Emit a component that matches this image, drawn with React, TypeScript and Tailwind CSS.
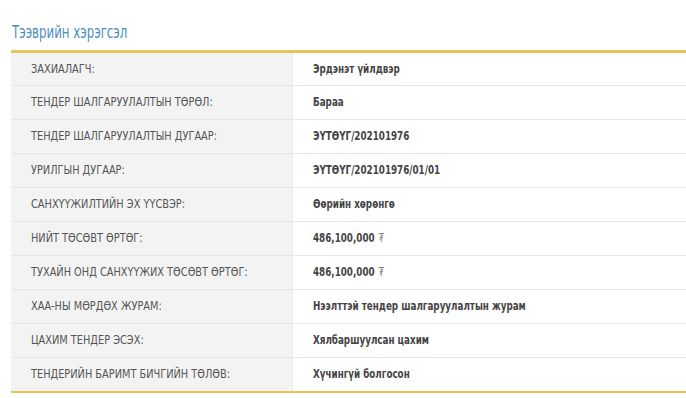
const rows: [string, string][] = [
  ["ЗАХИАЛАГЧ:", "Эрдэнэт үйлдвэр"],
  ["ТЕНДЕР ШАЛГАРУУЛАЛТЫН ТӨРӨЛ:", "Бараа"],
  ["ТЕНДЕР ШАЛГАРУУЛАЛТЫН ДУГААР:", "ЭҮТӨҮГ/202101976"],
  ["УРИЛГЫН ДУГААР:", "ЭҮТӨҮГ/202101976/01/01"],
  ["САНХҮҮЖИЛТИЙН ЭХ ҮҮСВЭР:", "Өөрийн хөрөнгө"],
  ["НИЙТ ТӨСӨВТ ӨРТӨГ:", "486,100,000"],
  ["ТУХАЙН ОНД САНХҮҮЖИХ ТӨСӨВТ ӨРТӨГ:", "486,100,000"],
  ["ХАА-НЫ МӨРДӨХ ЖУРАМ:", "Нээлттэй тендер шалгаруулалтын журам"],
  ["ЦАХИМ ТЕНДЕР ЭСЭХ:", "Хялбаршуулсан цахим"],
  ["ТЕНДЕРИЙН БАРИМТ БИЧГИЙН ТӨЛӨВ:", "Хүчингүй болгосон"],
];

// no narrow font installed, so DejaVu Condensed squeezed horizontally
export default function App() {
  return (
    <div
      className="h-[398px] w-[686px] overflow-hidden bg-white pl-[11px] pt-[21px]"
      style={{ fontFamily: '"DejaVu Sans Condensed", "Liberation Sans", sans-serif' }}
    >
      <h2 className="pl-[1px] text-[17px] leading-[22px] text-[#4a8dbd]">
        <span className="inline-block origin-left scale-x-[0.77] whitespace-nowrap">Тээврийн хэрэгсэл</span>
      </h2>

      <table className="mt-[7px] w-[676px] border-collapse border-t-[3px] border-b-[2px] border-[#e9c555] text-[12.5px]">
        <tbody>
          {rows.map(([label, value], i) => (
            <tr key={label} className={i < rows.length - 1 ? "border-b border-[#e6e6e6]" : ""}>
              <td className="h-[34px] w-[281px] bg-[#f3f3f3] pl-[20px] align-middle text-[#555]">
                <span className="inline-block origin-left scale-x-[0.87] whitespace-nowrap">{label}</span>
              </td>
              <td className="h-[34px] border-l border-[#ececec] pl-[20px] align-middle font-bold text-[#444]">
                <span className="inline-block origin-left scale-x-[0.78] whitespace-nowrap">
                  {value}
                  {value.startsWith("486") && <span className="ml-[5px] font-normal text-[#888]">₮</span>}
                </span>
              </td>
            </tr>
          ))}
        </tbody>
      </table>
    </div>
  );
}
